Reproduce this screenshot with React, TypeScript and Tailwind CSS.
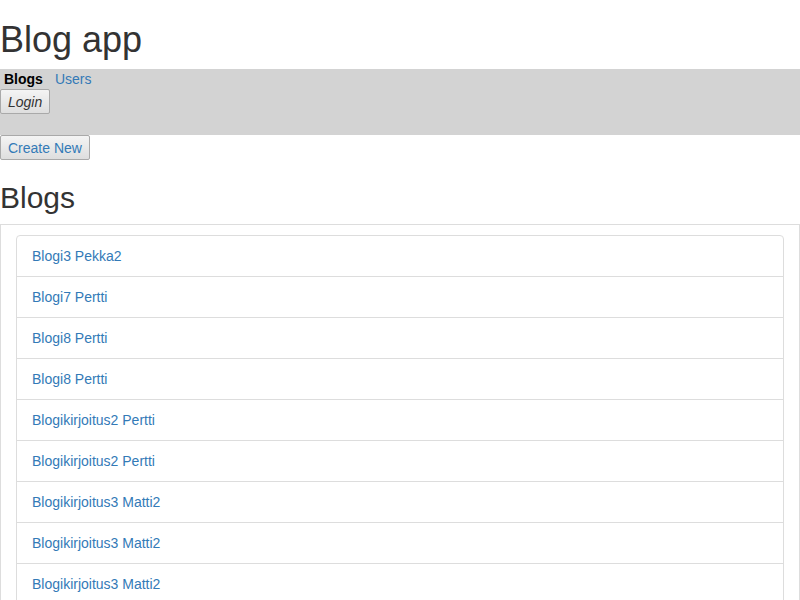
import React from "react";

const blogs = [
  "Blogi3 Pekka2",
  "Blogi7 Pertti",
  "Blogi8 Pertti",
  "Blogi8 Pertti",
  "Blogikirjoitus2 Pertti",
  "Blogikirjoitus2 Pertti",
  "Blogikirjoitus3 Matti2",
  "Blogikirjoitus3 Matti2",
  "Blogikirjoitus3 Matti2",
  "Blogikirjoitus4 Matti2",
];

const btn =
  "h-[25px] px-[7px] border border-[#a9a9a9] rounded-[2px] bg-gradient-to-b from-[#f4f4f4] to-[#dedede] text-[14px] leading-[20px]";

export default function App() {
  return (
    <div
      className="w-[800px] h-[600px] overflow-hidden bg-white text-[#333] text-[14px] leading-[20px]"
      style={{ fontFamily: '"Liberation Sans", Arial, sans-serif' }}
    >
      <h1 className="mt-[20px] mb-[10px] text-[36px] leading-[39px] font-normal">Blog app</h1>
      <div className="bg-[#d3d3d3] h-[66px]">
        <div className="flex pl-[4px] h-[20px]">
          <span className="font-bold text-black">Blogs</span>
          <span className="ml-[12px] text-[#337ab7]">Users</span>
        </div>
        <button className={`${btn} italic text-[#333]`}>Login</button>
      </div>
      <button className={`${btn} text-[#337ab7]`}>Create New</button>
      <h2 className="mt-[21px] mb-[10px] text-[30px] leading-[33px] font-normal">Blogs</h2>
      <div className="border border-[#ddd] pt-[10px] px-[15px]">
        <div className="flex flex-col">
          {blogs.map((b, i) => (
            <div
              key={i}
              className={`border border-[#ddd] px-[15px] py-[10px] -mb-px ${i === 0 ? "rounded-t-[4px]" : ""}`}
            >
              <span className="text-[#337ab7]">{b}</span>
            </div>
          ))}
        </div>
      </div>
    </div>
  );
}
